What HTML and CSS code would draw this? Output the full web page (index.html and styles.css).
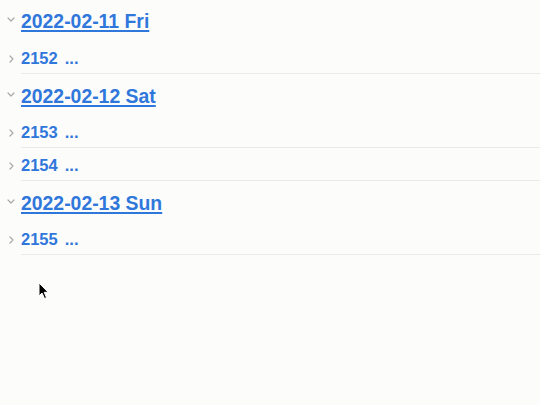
FILE: index.html
```html
<!DOCTYPE html>
<html>
<head>
<meta charset="utf-8">
<link rel="stylesheet" href="styles.css">
</head>
<body>
<div class="journal">
  <section class="day">
    <div class="day-head">
      <svg class="chev-down" width="8" height="5" viewBox="0 0 8 5"><path d="M1 1 L4 4 L7 1" fill="none" stroke="#a9a9a9" stroke-width="1.2" stroke-linecap="round" stroke-linejoin="round"/></svg>
      <a class="day-title">2022-02-11 Fri</a>
    </div>
    <div class="item">
      <svg class="chev-right" width="5" height="8" viewBox="0 0 5 8"><path d="M1 1 L4 4 L1 7" fill="none" stroke="#a9a9a9" stroke-width="1.2" stroke-linecap="round" stroke-linejoin="round"/></svg>
      <div class="item-body"><span class="num">2152</span><span class="more">...</span></div>
    </div>
  </section>
  <section class="day">
    <div class="day-head">
      <svg class="chev-down" width="8" height="5" viewBox="0 0 8 5"><path d="M1 1 L4 4 L7 1" fill="none" stroke="#a9a9a9" stroke-width="1.2" stroke-linecap="round" stroke-linejoin="round"/></svg>
      <a class="day-title">2022-02-12 Sat</a>
    </div>
    <div class="item">
      <svg class="chev-right" width="5" height="8" viewBox="0 0 5 8"><path d="M1 1 L4 4 L1 7" fill="none" stroke="#a9a9a9" stroke-width="1.2" stroke-linecap="round" stroke-linejoin="round"/></svg>
      <div class="item-body"><span class="num">2153</span><span class="more">...</span></div>
    </div>
    <div class="item">
      <svg class="chev-right" width="5" height="8" viewBox="0 0 5 8"><path d="M1 1 L4 4 L1 7" fill="none" stroke="#a9a9a9" stroke-width="1.2" stroke-linecap="round" stroke-linejoin="round"/></svg>
      <div class="item-body"><span class="num">2154</span><span class="more">...</span></div>
    </div>
  </section>
  <section class="day">
    <div class="day-head">
      <svg class="chev-down" width="8" height="5" viewBox="0 0 8 5"><path d="M1 1 L4 4 L7 1" fill="none" stroke="#a9a9a9" stroke-width="1.2" stroke-linecap="round" stroke-linejoin="round"/></svg>
      <a class="day-title">2022-02-13 Sun</a>
    </div>
    <div class="item">
      <svg class="chev-right" width="5" height="8" viewBox="0 0 5 8"><path d="M1 1 L4 4 L1 7" fill="none" stroke="#a9a9a9" stroke-width="1.2" stroke-linecap="round" stroke-linejoin="round"/></svg>
      <div class="item-body"><span class="num">2155</span><span class="more">...</span></div>
    </div>
  </section>
</div>
<svg class="cursor" width="12" height="18" viewBox="0 0 12 18"><path d="M1 1 L1 14 L4 11 L6.5 16.5 L8.5 15.6 L6.2 10.3 L10.2 10.3 Z" fill="#000" stroke="#fff" stroke-width="1" stroke-linejoin="round"/></svg>
</body>
</html>
```

FILE: styles.css
```css
html, body {
  margin: 0;
  padding: 0;
  background: #fcfcfb;
}
body {
  font-family: "Liberation Sans", Arial, sans-serif;
  height: 405px;
  overflow: hidden;
  position: relative;
}
.journal {
  display: flex;
  flex-direction: column;
}
.day {
  display: flex;
  flex-direction: column;
}
.day:first-child .day-head {
  padding-top: 9px;
  padding-bottom: 8px;
}
.day-head {
  display: flex;
  align-items: center;
  height: 41px;
  box-sizing: border-box;
  padding-top: 10px;
  padding-bottom: 7px;
}
.chev-down {
  width: 8px;
  margin-left: 7px;
  margin-right: 6px;
  margin-top: -3px;
}
.day-title {
  font-size: 19.4px;
  font-weight: bold;
  color: #3077db;
  line-height: 24px;
  text-decoration: underline;
  text-decoration-thickness: 1.5px;
  text-underline-offset: 2px;
}
.item {
  display: flex;
  align-items: center;
  height: 33px;
}
.chev-right {
  width: 5px;
  margin-left: 9px;
  margin-right: 7px;
  margin-top: 2px;
}
.item-body {
  flex: 1;
  height: 33px;
  box-sizing: border-box;
  border-bottom: 1px solid #eaeaea;
  padding-top: 3px;
  font-size: 16.5px;
  font-weight: bold;
  line-height: 29px;
  color: #3077db;
}
.more {
  margin-left: 7px;
}
.cursor {
  position: absolute;
  left: 38px;
  top: 282px;
}
```
